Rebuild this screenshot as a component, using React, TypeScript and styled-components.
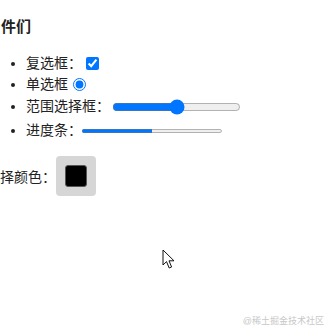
import React from "react";
import styled, { createGlobalStyle } from "styled-components";

const GlobalStyle = createGlobalStyle`
  html, body {
    margin: 0;
    padding: 0;
    background: #fff;
  }
  body {
    font-family: "Liberation Sans", "Noto Sans CJK SC", sans-serif;
    font-size: 14px;
    color: #222;
    overflow: hidden;
    width: 328px;
    height: 328px;
  }
`;

const Page = styled.div`
  position: relative;
  width: 328px;
  height: 328px;
  overflow: hidden;
  padding-top: 17px;
  box-sizing: border-box;
`;

const Title = styled.h3`
  margin: 0 0 15px 1px;
  font-size: 15px;
  font-weight: bold;
  line-height: 20px;
`;

const List = styled.ul`
  margin: 0;
  padding-left: 26px;
`;

const Item = styled.li<{ $h: number }>`
  height: ${(p) => p.$h}px;
  line-height: ${(p) => p.$h}px;
`;

const Row = styled.span`
  display: inline-flex;
  align-items: center;
  vertical-align: top;
  height: 100%;
`;

const Check = styled.input`
  margin: 0 0 0 4px;
  width: 13px;
  height: 13px;
`;

const Radio = styled.input`
  margin: 0 0 0 5px;
  width: 13px;
  height: 13px;
`;

const Range = styled.input`
  margin: 0 0 0 2px;
  width: 129px;
`;

const Progress = styled.progress`
  margin: 2px 0 0;
  width: 140px;
  height: 8px;
`;

const ColorRow = styled.div`
  display: flex;
  align-items: center;
  margin-top: 14px;
`;

const ColorPick = styled.input`
  width: 40px;
  height: 40px;
  padding: 9px;
  margin: 0;
  border: none;
  border-radius: 4px;
  background: #d6d6d6;
  cursor: pointer;
  &::-webkit-color-swatch-wrapper {
    padding: 0;
  }
  &::-webkit-color-swatch {
    border: 1px solid #555;
    border-radius: 3px;
  }
`;

const Pointer = styled.svg`
  position: absolute;
  left: 162px;
  top: 249px;
`;

const Mark = styled.div`
  position: absolute;
  right: 4px;
  bottom: 1px;
  font-size: 9px;
  color: #c8c8c8;
`;

export default function App() {
  return (
    <Page>
      <GlobalStyle />
      <Title>件们</Title>
      <List>
        <Item $h={22}>
          <Row>
            复选框：<Check type="checkbox" defaultChecked />
          </Row>
        </Item>
        <Item $h={21}>
          <Row>
            单选框<Radio type="radio" defaultChecked />
          </Row>
        </Item>
        <Item $h={23}>
          <Row>
            范围选择框：<Range type="range" defaultValue={50} />
          </Row>
        </Item>
        <Item $h={24}>
          <Row>
            进度条：<Progress value={50} max={100} />
          </Row>
        </Item>
      </List>
      <ColorRow>
        择颜色：<ColorPick type="color" defaultValue="#000000" />
      </ColorRow>
      <Pointer width="14" height="21" viewBox="0 0 14 21">
        <path
          d="M1 1 L1 16 L4.5 12.6 L7.2 19 L9.6 18 L7 11.8 L12 11.8 Z"
          fill="#fff"
          stroke="#111"
          strokeWidth="1"
          strokeLinejoin="round"
        />
      </Pointer>
      <Mark>@稀土掘金技术社区</Mark>
    </Page>
  );
}
